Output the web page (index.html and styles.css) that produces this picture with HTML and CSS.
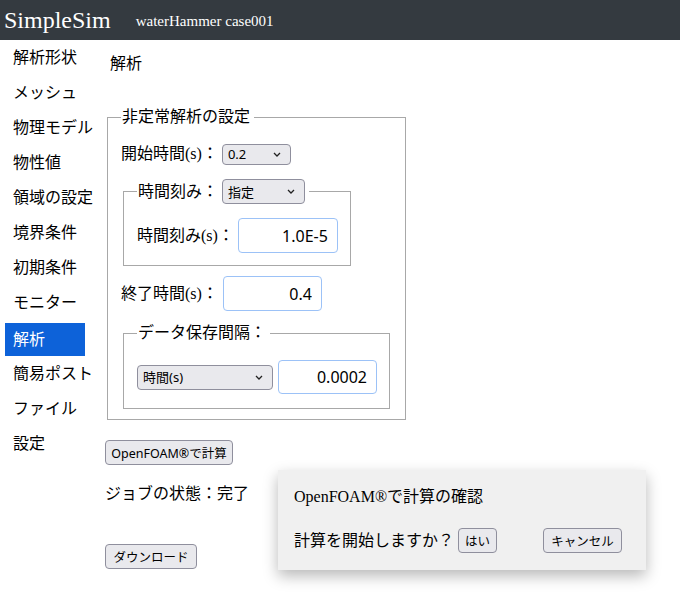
FILE: index.html
```html
<!DOCTYPE html>
<html lang="ja">
<head>
<meta charset="utf-8">
<title>SimpleSim</title>
<link rel="stylesheet" href="styles.css">
</head>
<body>
<header class="topbar">
  <span class="brand">SimpleSim</span>
  <span class="case">waterHammer case001</span>
</header>
<div class="layout">
  <nav class="sidenav">
    <div class="nav-item">解析形状</div>
    <div class="nav-item">メッシュ</div>
    <div class="nav-item">物理モデル</div>
    <div class="nav-item">物性値</div>
    <div class="nav-item">領域の設定</div>
    <div class="nav-item">境界条件</div>
    <div class="nav-item">初期条件</div>
    <div class="nav-item">モニター</div>
    <div class="nav-item active">解析</div>
    <div class="nav-item">簡易ポスト</div>
    <div class="nav-item">ファイル</div>
    <div class="nav-item">設定</div>
  </nav>
  <main class="main">
    <div class="page-title">解析</div>
    <fieldset class="box box-outer">
      <legend class="box-legend">非定常解析の設定</legend>
      <div class="row row-start">
        <span class="label">開始時間(s)：</span>
        <select class="sel sel-start"><option>0.2</option></select>
      </div>
      <fieldset class="box box-step">
        <legend class="box-legend legend-ctrl">
          <span class="label">時間刻み：</span>
          <select class="sel sel-step"><option>指定</option></select>
        </legend>
        <div class="row">
          <span class="label">時間刻み(s)：</span>
          <input class="num num-step" type="text" value="1.0E-5">
        </div>
      </fieldset>
      <div class="row row-end">
        <span class="label">終了時間(s)：</span>
        <input class="num num-end" type="text" value="0.4">
      </div>
      <fieldset class="box box-save">
        <legend class="box-legend">データ保存間隔：</legend>
        <div class="row row-save">
          <select class="sel sel-save"><option>時間(s)</option></select>
          <input class="num num-save" type="text" value="0.0002">
        </div>
      </fieldset>
    </fieldset>
    <button class="btn btn-run" type="button">OpenFOAM®で計算</button>
    <div class="status">ジョブの状態：完了</div>
    <button class="btn btn-dl" type="button">ダウンロード</button>
  </main>
</div>
<div class="dialog">
  <div class="dialog-title">OpenFOAM®で計算の確認</div>
  <div class="dialog-row">
    <span>計算を開始しますか？</span>
    <button class="btn btn-yes" type="button">はい</button>
    <button class="btn btn-cancel" type="button">キャンセル</button>
  </div>
</div>
</body>
</html>
```

FILE: styles.css
```css
html, body {
  margin: 0;
  padding: 0;
  background: #ffffff;
}
body {
  font-family: "Liberation Serif", "Noto Sans CJK JP", serif;
  font-size: 16px;
  color: #000;
  line-height: 24px;
}
.topbar {
  height: 40px;
  background: #343a40;
  color: #ffffff;
  display: flex;
  align-items: center;
  padding-left: 4px;
}
.brand {
  font-size: 24px;
  line-height: 30px;
}
.case {
  font-size: 15px;
  margin-left: 25px;
  margin-top: 2px;
}
.layout {
  display: flex;
}
.sidenav {
  width: 80px;
  padding-left: 5px;
  display: flex;
  flex-direction: column;
}
.nav-item {
  height: 35px;
  line-height: 35px;
  padding-left: 8px;
  white-space: nowrap;
}
.nav-item.active {
  background: #0d62d9;
  color: #ffffff;
  height: 33px;
  line-height: 33px;
  margin-top: 3px;
}
.main {
  padding-left: 20px;
  display: flex;
  flex-direction: column;
  align-items: flex-start;
}
.page-title {
  margin-top: 12px;
  padding-left: 5px;
}
.box {
  margin: 0 0 0 2px;
  border: 1px solid #a8a8a8;
  padding: 0 12px 10px 13px;
  min-width: 0;
}
.box-legend {
  padding: 0 4px 0 1px;
  line-height: 24px;
}
.box-outer {
  margin-top: 29px;
  width: 272px;
}
.row {
  display: flex;
  align-items: center;
}
.label {
  white-space: nowrap;
}
.row-start {
  margin-top: 13px;
  height: 24px;
}
.sel {
  -webkit-appearance: none;
  appearance: none;
  font-family: "Noto Sans", "Noto Sans CJK JP", sans-serif;
  font-size: 13px;
  color: #000;
  margin: 0;
  box-sizing: border-box;
  border: 1px solid #8f8f9d;
  border-radius: 4px;
  background-color: #e9e9ed;
  background-image: url("data:image/svg+xml,%3Csvg xmlns='http://www.w3.org/2000/svg' width='8' height='5' viewBox='0 0 8 5'%3E%3Cpath d='M1 1L4 4L7 1' fill='none' stroke='%23222' stroke-width='1.3'/%3E%3C/svg%3E");
  background-repeat: no-repeat;
  background-position: right 9px center;
  background-size: 8px 5px;
  padding: 0 20px 0 5px;
  outline: none;
}
.sel-start {
  width: 69px;
  height: 21px;
  margin-left: 4px;
}
.box-step {
  margin-top: 13px;
  width: 201px;
  padding-bottom: 12px;
}
.legend-ctrl {
  display: flex;
  align-items: center;
}
.sel-step {
  width: 83px;
  height: 25px;
  margin-left: 4px;
}
.box-step .row {
  margin-top: 14px;
}
.num {
  font-family: "Noto Sans", "Noto Sans CJK JP", sans-serif;
  font-size: 16px;
  text-align: right;
  border: 1px solid #9cc2f7;
  border-radius: 4px;
  box-sizing: border-box;
  height: 35px;
  padding: 0 9px 0 4px;
  margin: 0;
  background: #fff;
  color: #000;
  outline: none;
}
.num-step {
  width: 100px;
  margin-left: 4px;
}
.row-end {
  margin-top: 10px;
}
.num-end {
  width: 99px;
  margin-left: 5px;
}
.box-save {
  margin-top: 10px;
  width: 240px;
  padding-bottom: 14px;
}
.row-save {
  margin-top: 15px;
  gap: 5px;
}
.sel-save {
  width: 136px;
  height: 25px;
}
.num-save {
  width: 99px;
  height: 34px;
}
.btn {
  -webkit-appearance: none;
  appearance: none;
  font-family: "Noto Sans", "Noto Sans CJK JP", sans-serif;
  font-size: 12.5px;
  color: #000;
  margin: 0;
  height: 25px;
  padding: 0;
  box-sizing: border-box;
  border: 1px solid #8f8f9d;
  border-radius: 4px;
  background: #e9e9ed;
  white-space: nowrap;
  text-align: center;
}
.btn-run {
  margin-top: 20px;
  width: 128px;
}
.status {
  margin-top: 17px;
}
.btn-dl {
  margin-top: 38px;
  width: 92px;
}
.dialog {
  position: absolute;
  left: 278px;
  top: 470px;
  width: 368px;
  height: 100px;
  box-sizing: border-box;
  background: #f0f0f0;
  box-shadow: 0 6px 14px rgba(0, 0, 0, 0.28);
  padding: 15px 16px 0 16px;
}
.dialog-title {
  line-height: 24px;
}
.dialog-row {
  margin-top: 19px;
  display: flex;
  align-items: center;
}
.btn-yes {
  margin-left: 4px;
  width: 39px;
}
.btn-cancel {
  margin-left: 46px;
  width: 79px;
}
```
